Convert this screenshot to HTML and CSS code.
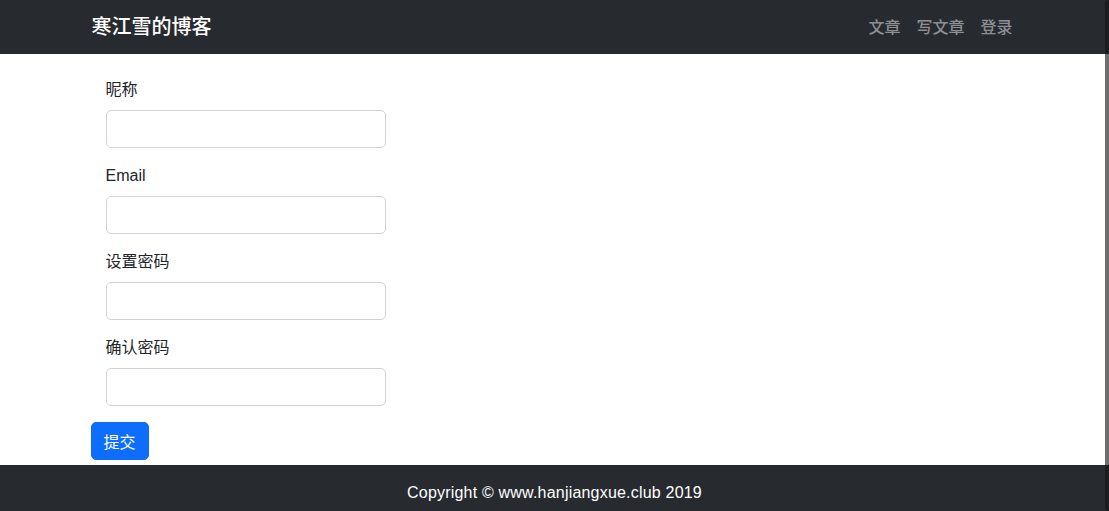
FILE: index.html
```html
<!DOCTYPE html>
<html lang="zh-CN">
<head>
<meta charset="utf-8">
<title>寒江雪的博客</title>
<link rel="stylesheet" href="styles.css">
</head>
<body>
<nav class="navbar">
  <div class="container nav-inner">
    <a class="brand" href="#">寒江雪的博客</a>
    <ul class="nav-links">
      <li><a href="#">文章</a></li>
      <li><a href="#">写文章</a></li>
      <li><a href="#">登录</a></li>
    </ul>
  </div>
</nav>
<main class="container main">
  <form class="form">
    <div class="group">
      <label class="label" for="nick">昵称</label>
      <input class="input" id="nick" type="text">
    </div>
    <div class="group">
      <label class="label" for="email">Email</label>
      <input class="input" id="email" type="email">
    </div>
    <div class="group">
      <label class="label" for="pw">设置密码</label>
      <input class="input" id="pw" type="password">
    </div>
    <div class="group">
      <label class="label" for="pw2">确认密码</label>
      <input class="input" id="pw2" type="password">
    </div>
    <button class="btn" type="submit">提交</button>
  </form>
</main>
<footer class="footer">Copyright © www.hanjiangxue.club 2019</footer>
<div class="scrollbar"></div>
</body>
</html>
```

FILE: styles.css
```css
* { box-sizing: border-box; }
html, body { height: 100%; }
body {
  margin: 0;
  font-family: "Liberation Sans", "Noto Sans CJK SC", sans-serif;
  font-size: 16px;
  line-height: 24px;
  color: #212529;
  background: #fff;
  display: flex;
  flex-direction: column;
  overflow: hidden;
}
.container {
  width: 960px;
  margin: 0 auto;
  padding: 0 14px 0 16px;
}
.navbar {
  background: #272b30;
  height: 54px;
  flex: none;
}
.nav-inner {
  height: 54px;
  padding-bottom: 3px;
  display: flex;
  align-items: center;
  justify-content: space-between;
}
.brand {
  color: #fff;
  text-decoration: none;
  font-family: "Noto Sans CJK SC", sans-serif;
  font-size: 20px;
  font-weight: 500;
  line-height: 30px;
  padding-left: 1px;
}
.nav-links {
  list-style: none;
  margin: 0;
  padding: 0;
  display: flex;
}
.nav-links a {
  display: block;
  padding: 0 8px;
  color: #8d8f92;
  text-decoration: none;
  font-family: "Noto Sans CJK SC", sans-serif;
  font-weight: 500;
  font-size: 16px;
  line-height: 24px;
}
.main {
  flex: 1;
  padding-top: 24px;
}
.form {
  display: flex;
  flex-direction: column;
  align-items: flex-start;
}
.group {
  padding-left: 15px;
  margin-bottom: 16px;
  display: flex;
  flex-direction: column;
}
.label {
  font-family: "Liberation Sans", "Noto Sans CJK SC", sans-serif;
  font-size: 16px;
  line-height: 24px;
  margin-bottom: 8px;
  color: #212529;
}
.input {
  width: 280px;
  height: 38px;
  border: 1px solid #ced4da;
  border-radius: 5px;
  background: #fff;
  font: inherit;
  padding: 6px 12px;
}
.btn {
  height: 38px;
  padding: 0 12px;
  border: 1px solid #0d6efd;
  border-radius: 5px;
  background: #0d6efd;
  color: #fff;
  font-family: "Noto Sans CJK SC", sans-serif;
  font-size: 16px;
  line-height: 24px;
}
.footer {
  flex: none;
  height: 46px;
  background: #272b30;
  color: #fff;
  text-align: center;
  padding-top: 16px;
  font-family: "Liberation Sans", sans-serif;
  font-size: 16px;
  line-height: 24px;
  letter-spacing: 0.2px;
}
.scrollbar {
  position: fixed;
  top: 0;
  right: 0;
  bottom: 0;
  width: 4px;
  border-radius: 3px 0 0 3px;
  background: linear-gradient(#1b1c1e 0 54px, #6e6e6e 54px 465px, #1b1c1e 465px);
}
```
